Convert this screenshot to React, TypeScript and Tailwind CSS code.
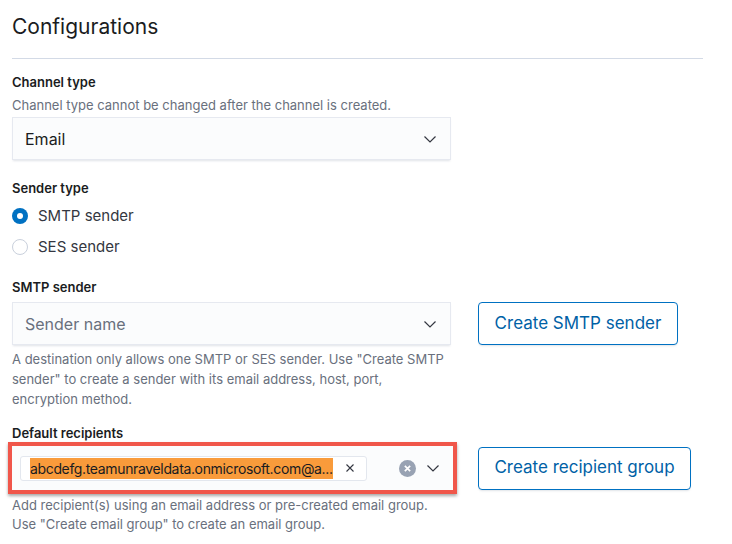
import React from 'react'

const font = { fontFamily: 'Inter, "Noto Sans", sans-serif' }

function Chevron() {
  return (
    <svg width="16" height="16" viewBox="0 0 16 16" fill="none" aria-hidden>
      <path d="M2.5 5.5 8 11l5.5-5.5" stroke="#343741" strokeWidth="1.2" />
    </svg>
  )
}

function Label({ children }: { children: React.ReactNode }) {
  return <p className="text-[13px] font-semibold leading-[20px] text-[#1a1c21]">{children}</p>
}

function Help({ children }: { children: React.ReactNode }) {
  return <p className="text-[13px] leading-[20px] text-[#69707d]">{children}</p>
}

function Select({ value, placeholder }: { value?: string; placeholder?: string }) {
  return (
    <div className="flex h-[43px] w-[439px] items-center justify-between border border-[#e6e9f0] bg-[#fbfcfd] pl-3 pr-3 shadow-[0_2px_2px_-1px_rgba(152,162,179,0.3)]">
      <span className={`text-[16px] ${value ? 'text-[#1a1c21]' : 'text-[#69707d]'}`}>{value ?? placeholder}</span>
      <Chevron />
    </div>
  )
}

function OutlineButton({ children, width }: { children: React.ReactNode; width: string }) {
  return (
    <button className={`flex h-[43px] ${width} items-center justify-center rounded-[4px] border border-[#0071c2] bg-white text-[17px] text-[#0061a6] shadow-[0_2px_2px_-1px_rgba(152,162,179,0.3)]`}>
      {children}
    </button>
  )
}

export default function App() {
  return (
    <div className="h-[544px] w-[732px] overflow-hidden bg-white pl-3 pt-[13px]" style={font}>
      <h2 className="text-[21px] leading-[28px] text-[#1a1c21]">Configurations</h2>
      <div className="mt-[17px] h-px w-[691px] bg-[#d3dae6]" />

      <div className="mt-[13px]">
        <Label>Channel type</Label>
        <div className="mt-[3px]">
          <Help>Channel type cannot be changed after the channel is created.</Help>
        </div>
        <div className="mt-[2px]">
          <Select value="Email" />
        </div>
      </div>

      <div className="mt-[18px]">
        <Label>Sender type</Label>
        <div className="mt-[7px] flex flex-col gap-[8px]">
          <label className="flex items-center gap-[10px]">
            <span className="flex size-4 items-center justify-center rounded-full bg-[#0071c2]">
              <span className="size-[6px] rounded-full bg-white" />
            </span>
            <span className="text-[15px] text-[#343741]">SMTP sender</span>
          </label>
          <label className="flex items-center gap-[10px]">
            <span className="size-4 rounded-full border border-[#c9d0dc] bg-white" />
            <span className="text-[15px] text-[#343741]">SES sender</span>
          </label>
        </div>
      </div>

      <div className="mt-[19px]">
        <Label>SMTP sender</Label>
        <div className="mt-[5px] flex gap-[27px]">
          <Select placeholder="Sender name" />
          <OutlineButton width="w-[200px]">Create SMTP sender</OutlineButton>
        </div>
        <div className="mt-[4px] w-[436px]">
          <Help>
            A destination only allows one SMTP or SES sender. Use "Create SMTP sender" to create a sender with its
            email address, host, port, encryption method.
          </Help>
        </div>
      </div>

      <div className="mt-[14px]">
        <Label>Default recipients</Label>
        <div className="mt-[-1px] flex items-center gap-[21px]">
          <div className="-ml-1 border-4 border-[#f0564a] shadow-[0_2px_3px_rgba(0,0,0,0.35)]">
            <div className="flex h-[44px] w-[441px] items-center justify-between bg-[#fbfcfd] pl-2 pr-3">
              <div className="flex h-[25px] w-[347px] items-center justify-between rounded-[3px] border border-[#e3e7ee] bg-white pl-[9px] pr-[10px]">
                <span className="whitespace-nowrap bg-[#f99b3b] text-[14px] tracking-[-0.35px] text-[#1a1c21]">
                  abcdefg.teamunraveldata.onmicrosoft.com@a...
                </span>
                <svg width="12" height="12" viewBox="0 0 12 12" aria-hidden>
                  <path d="M2.5 2.5l7 7M9.5 2.5l-7 7" stroke="#343741" strokeWidth="1.1" />
                </svg>
              </div>
              <div className="flex items-center gap-[9px]">
                <svg width="17" height="17" viewBox="0 0 16 16" aria-hidden>
                  <circle cx="8" cy="8" r="8" fill="#98a2b3" />
                  <path d="M5.5 5.5l5 5M10.5 5.5l-5 5" stroke="#fff" strokeWidth="1.6" />
                </svg>
                <Chevron />
              </div>
            </div>
          </div>
          <OutlineButton width="w-[213px]">Create recipient group</OutlineButton>
        </div>
        <div className="mt-[2px]">
          <p className="text-[13px] leading-[19px] text-[#69707d]">
            Add recipient(s) using an email address or pre-created email group.
          </p>
          <p className="text-[13px] leading-[19px] text-[#69707d]">
            Use "Create email group" to create an email group.
          </p>
        </div>
      </div>
    </div>
  )
}
